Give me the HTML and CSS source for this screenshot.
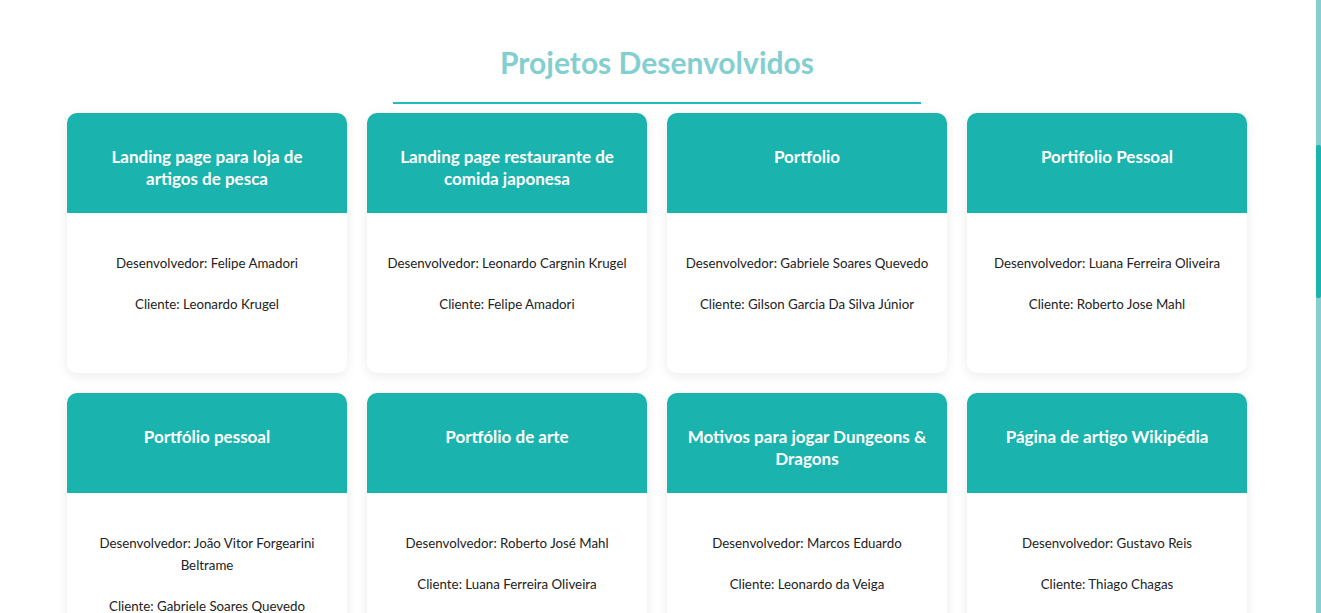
FILE: index.html
```html
<!DOCTYPE html>
<html lang="pt-BR">
<head>
<meta charset="utf-8">
<title>Projetos Desenvolvidos</title>
<link rel="stylesheet" href="styles.css">
</head>
<body>
<main class="page">
  <h2 class="section-title">Projetos Desenvolvidos</h2>
  <div class="title-rule"></div>
  <section class="grid">
    <article class="card">
      <header class="card-head"><h3>Landing page para loja de artigos de pesca</h3></header>
      <div class="card-body"><p>Desenvolvedor: Felipe Amadori</p><p>Cliente: Leonardo Krugel</p></div>
    </article>
    <article class="card">
      <header class="card-head"><h3>Landing page restaurante de comida japonesa</h3></header>
      <div class="card-body"><p>Desenvolvedor: Leonardo Cargnin Krugel</p><p>Cliente: Felipe Amadori</p></div>
    </article>
    <article class="card">
      <header class="card-head"><h3>Portfolio</h3></header>
      <div class="card-body"><p>Desenvolvedor: Gabriele Soares Quevedo</p><p>Cliente: Gilson Garcia Da Silva Júnior</p></div>
    </article>
    <article class="card">
      <header class="card-head"><h3>Portifolio Pessoal</h3></header>
      <div class="card-body"><p>Desenvolvedor: Luana Ferreira Oliveira</p><p>Cliente: Roberto Jose Mahl</p></div>
    </article>
    <article class="card">
      <header class="card-head"><h3>Portfólio pessoal</h3></header>
      <div class="card-body"><p>Desenvolvedor: João Vitor Forgearini Beltrame</p><p>Cliente: Gabriele Soares Quevedo</p></div>
    </article>
    <article class="card">
      <header class="card-head"><h3>Portfólio de arte</h3></header>
      <div class="card-body"><p>Desenvolvedor: Roberto José Mahl</p><p>Cliente: Luana Ferreira Oliveira</p></div>
    </article>
    <article class="card">
      <header class="card-head"><h3>Motivos para jogar Dungeons &amp; Dragons</h3></header>
      <div class="card-body"><p>Desenvolvedor: Marcos Eduardo</p><p>Cliente: Leonardo da Veiga</p></div>
    </article>
    <article class="card">
      <header class="card-head"><h3>Página de artigo Wikipédia</h3></header>
      <div class="card-body"><p>Desenvolvedor: Gustavo Reis</p><p>Cliente: Thiago Chagas</p></div>
    </article>
  </section>
</main>
<aside class="scrollbar"><div class="scroll-thumb"></div></aside>
</body>
</html>
```

FILE: styles.css
```css
* { box-sizing: border-box; }
html, body { margin: 0; padding: 0; height: 100%; overflow: hidden; }
body {
  display: flex;
  background: #ffffff;
  font-family: Lato, "Noto Sans", "DejaVu Sans", sans-serif;
  color: #222222;
}
.page {
  flex: 1;
  display: flex;
  flex-direction: column;
  align-items: center;
  padding: 44px 2px 0 0;
}
.page > * { flex-shrink: 0; }
.section-title {
  margin: 0;
  font-size: 30px;
  line-height: 36px;
  font-weight: 700;
  color: #83cfd0;
}
.title-rule {
  width: 528px;
  height: 2px;
  background: #25b9c1;
  margin-top: 22px;
}
.grid {
  margin-top: 9px;
  display: grid;
  grid-template-columns: repeat(4, 280px);
  gap: 20px;
}
.card {
  height: 260px;
  border-radius: 10px;
  background: #ffffff;
  box-shadow: 0 3px 12px rgba(0, 0, 0, 0.08);
  overflow: hidden;
  display: flex;
  flex-direction: column;
}
.card-head {
  height: 100px;
  flex-shrink: 0;
  background: #1bb3ae;
  padding: 33px 18px 0;
  text-align: center;
}
.card-head h3 {
  margin: 0;
  font-size: 17px;
  line-height: 22px;
  font-weight: 700;
  color: #ffffff;
}
.card-body {
  flex: 1;
  padding: 39px 15px 0;
  text-align: center;
}
.card-body p {
  margin: 0 0 19px;
  font-size: 13.3px;
  line-height: 22px;
  color: #222222;
}
.scrollbar {
  width: 5px;
  height: 100%;
  flex-shrink: 0;
  background: #85cfcf;
  padding-top: 145px;
}
.scroll-thumb {
  height: 153px;
  background: #1bb3ae;
  border-radius: 2px;
}
```
